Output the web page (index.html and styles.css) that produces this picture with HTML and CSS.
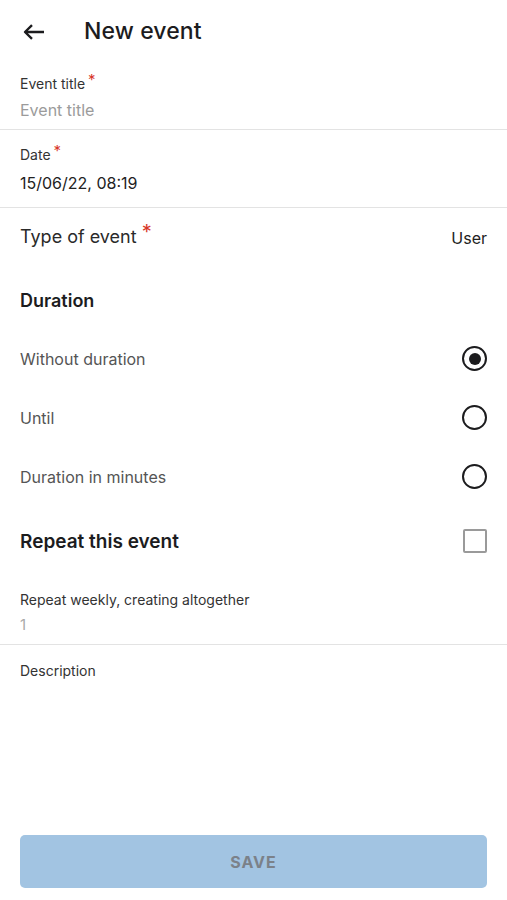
FILE: index.html
```html
<!DOCTYPE html>
<html lang="en">

<head>
    <meta charset="UTF-8">
    <meta name="viewport" content="width=device-width, initial-scale=1.0">
    <title>New event</title>
    <link rel="stylesheet" href="styles.css">
</head>

<body>
    <div class="page">
        <div class="header">
            <svg class="back" width="22" height="16" viewBox="0 0 22 16">
                <path d="M21 8H2 M9 1.2L2 8l7 6.8" fill="none" stroke="#1c1c1e" stroke-width="2.4" stroke-linejoin="round" />
            </svg>
            <h1 class="title">New event</h1>
        </div>

        <div class="field field-first">
            <div class="label">Event title<span class="req">*</span></div>
            <div class="placeholder">Event title</div>
        </div>

        <div class="field field-date">
            <div class="label">Date<span class="req">*</span></div>
            <div class="value">15/06/22, 08:19</div>
        </div>

        <div class="row row-type">
            <div class="row-title">Type of event<span class="req req-big">*</span></div>
            <div class="row-value">User</div>
        </div>

        <div class="heading">Duration</div>

        <div class="row option">
            <div class="option-label">Without duration</div>
            <span class="radio checked"></span>
        </div>
        <div class="row option">
            <div class="option-label">Until</div>
            <span class="radio"></span>
        </div>
        <div class="row option">
            <div class="option-label">Duration in minutes</div>
            <span class="radio"></span>
        </div>

        <div class="row row-repeat">
            <div class="heading-inline">Repeat this event</div>
            <span class="checkbox"></span>
        </div>

        <div class="field field-repeat">
            <div class="label">Repeat weekly, creating altogether</div>
            <div class="placeholder small">1</div>
        </div>

        <div class="field field-desc">
            <div class="label">Description</div>
        </div>

        <button class="save">SAVE</button>
    </div>
</body>

</html>
```

FILE: styles.css
```css
* {
    box-sizing: border-box;
}

body {
    margin: 0;
    background: #fff;
    font-family: Inter, "Liberation Sans", sans-serif;
    color: #1c1c1e;
}

.page {
    min-height: 100vh;
    display: flex;
    flex-direction: column;
}

.header {
    height: 62px;
    display: flex;
    align-items: center;
    padding-left: 23px;
}

.back {
    margin-right: 39px;
    margin-top: 2px;
}

.title {
    margin: 0;
    font-size: 23px;
    font-weight: 500;
    letter-spacing: 0.1px;
}

.field {
    padding: 0 20px 8px;
    border-bottom: 1px solid #e3e3e3;
}

.field-first {
    padding-top: 12px;
    padding-bottom: 7px;
}

.field-date {
    padding-top: 15px;
    padding-bottom: 12px;
}

.field-repeat {
    padding-top: 14px;
    padding-bottom: 8px;
}

.field-desc {
    padding-top: 16px;
    border-bottom: none;
}

.label {
    font-size: 14px;
    line-height: 20px;
    color: #333;
}

.placeholder {
    margin-top: 4px;
    font-size: 16px;
    line-height: 24px;
    color: #9b9b9b;
}

.placeholder.small {
    font-size: 15px;
    line-height: 22px;
    color: #aaa;
}

.value {
    margin-top: 6px;
    font-size: 16px;
    line-height: 24px;
    color: #222;
}

.req {
    color: #d8372a;
    margin-left: 3px;
    font-size: 15px;
    vertical-align: top;
    position: relative;
    top: -4px;
}

.req-big {
    font-size: 20px;
    top: -6px;
    margin-left: 5px;
}

.row {
    display: flex;
    align-items: center;
    justify-content: space-between;
    padding: 0 20px;
}

.row-type {
    height: 60px;
}

.row-title {
    font-size: 18px;
    color: #2a2a2a;
}

.row-value {
    font-size: 16px;
    color: #222;
}

.heading {
    padding: 22px 20px 17px;
    font-size: 18px;
    line-height: 22px;
    font-weight: 600;
}

.option {
    height: 59px;
}

.option-label {
    font-size: 16px;
    color: #555;
}

.radio {
    width: 25px;
    height: 25px;
    border: 2.5px solid #1c1c1e;
    border-radius: 50%;
    display: flex;
    align-items: center;
    justify-content: center;
}

.radio.checked::after {
    content: "";
    width: 12px;
    height: 12px;
    border-radius: 50%;
    background: #1c1c1e;
}

.row-repeat {
    height: 70px;
}

.heading-inline {
    font-size: 19px;
    font-weight: 600;
}

.checkbox {
    width: 24px;
    height: 24px;
    border: 2px solid #9a9a9a;
    border-radius: 2px;
}

.save {
    margin: auto 20px 12px;
    height: 53px;
    border: none;
    border-radius: 5px;
    background: #a2c4e2;
    color: #7b8189;
    font-family: Inter, "Liberation Sans", sans-serif;
    font-size: 16px;
    font-weight: 700;
    letter-spacing: 1px;
}
```
